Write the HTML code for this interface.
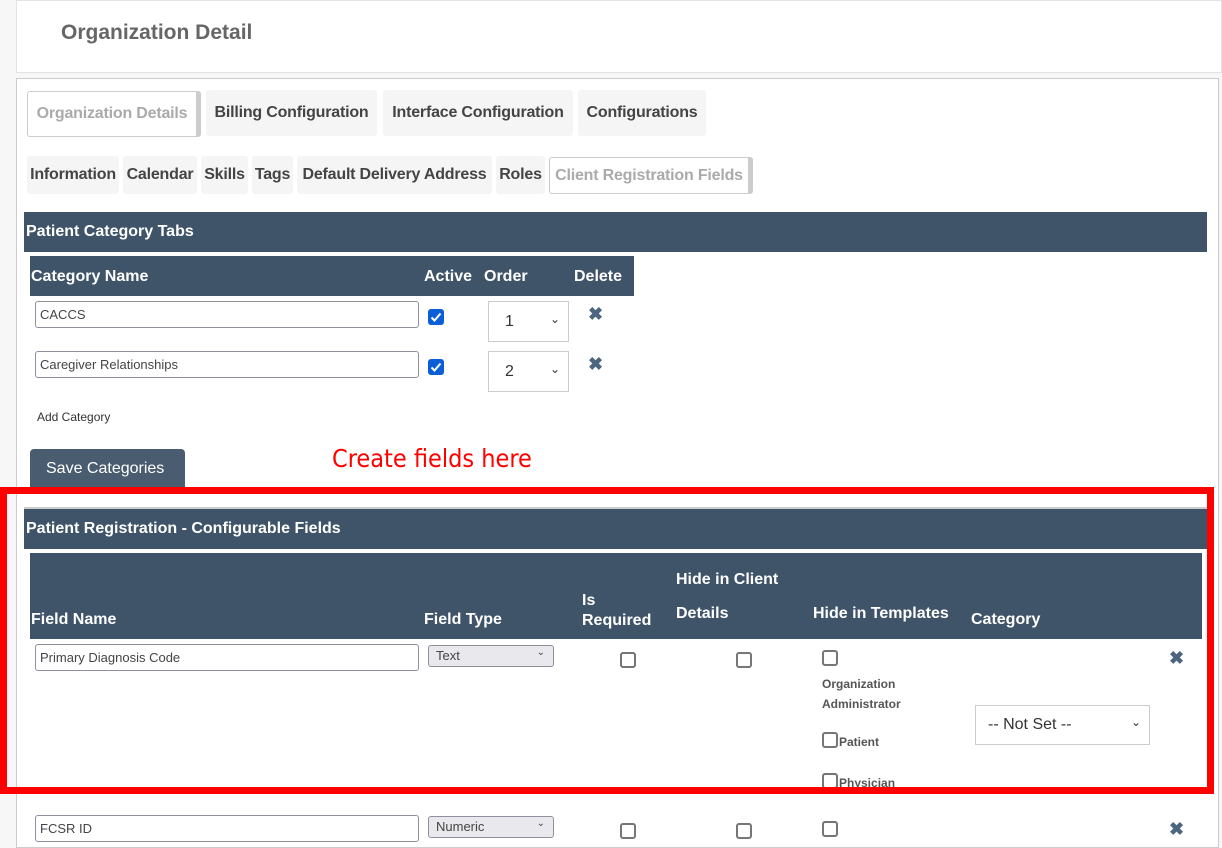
<!DOCTYPE html>
<html><head><meta charset="utf-8"><style>
*{box-sizing:border-box;margin:0;padding:0}
body{width:1222px;height:843px;overflow:hidden;background:#f7f7f7;font-family:"Liberation Sans",Arial,sans-serif;position:relative}
.a{position:absolute}
.tab{position:absolute;background:#f5f5f5;border-radius:3px;font-weight:bold;font-size:16px;color:#444;display:flex;align-items:center;justify-content:center;letter-spacing:-.2px}
.tab.act{background:#fff;border:1px solid #ccc;border-right:5px solid #ccc;color:#aaa}
.bar{position:absolute;background:#3f5469;color:#fff;font-weight:bold;font-size:16px}
.inp{position:absolute;background:#fff;border:1px solid #8f8f9d;border-radius:3px;font-size:13px;color:#444;padding:5px 4px}
.cb{position:absolute;width:16px;height:16px;border:2px solid #767676;border-radius:3px;background:#fff}
.cbc{position:absolute;width:16px;height:16px;border-radius:3px;background:#0b5ed7}
.x{position:absolute;font-size:18px;font-weight:bold;color:#4d6680;line-height:1}
.sel{position:absolute;background:#fff;border:1px solid #ccc;font-size:16px;color:#333}
.sm{position:absolute;background:#e9e9ed;border:1px solid #8f8f9d;border-radius:3px;font-size:13px;color:#444;padding:2px 7px}
.lab{position:absolute;font-size:12px;font-weight:bold;color:#555}
</style></head><body>
<div class="a" style="left:16px;top:0;width:1206px;height:73px;background:#fff;border:1px solid #e3e3e3"></div>
<div class="a" style="left:61px;top:21px;font-size:21px;font-weight:bold;color:#666">Organization Detail</div>
<div class="a" style="left:16px;top:78px;width:1203px;height:770px;background:#fff;border:1px solid #ccc"></div>

<div class="tab act" style="left:27px;top:91px;width:174px;height:46px">Organization Details</div>
<div class="tab" style="left:206px;top:90px;width:171px;height:46px">Billing Configuration</div>
<div class="tab" style="left:383px;top:90px;width:190px;height:46px">Interface Configuration</div>
<div class="tab" style="left:578px;top:90px;width:128px;height:46px">Configurations</div>

<div class="tab" style="left:27px;top:156px;width:92px;height:38px">Information</div>
<div class="tab" style="left:123px;top:156px;width:74px;height:38px">Calendar</div>
<div class="tab" style="left:201px;top:156px;width:47px;height:38px">Skills</div>
<div class="tab" style="left:252px;top:156px;width:41px;height:38px">Tags</div>
<div class="tab" style="left:297px;top:156px;width:195px;height:38px">Default Delivery Address</div>
<div class="tab" style="left:496px;top:156px;width:49px;height:38px">Roles</div>
<div class="tab act" style="left:549px;top:157px;width:204px;height:37px">Client Registration Fields</div>

<div class="bar" style="left:24px;top:212px;width:1183px;height:40px;padding:11px 2px">Patient Category Tabs</div>
<div class="bar" style="left:30px;top:256px;width:604px;height:40px">
<span class="a" style="left:1px;top:12px">Category Name</span><span class="a" style="left:394px;top:12px">Active</span><span class="a" style="left:454px;top:12px">Order</span><span class="a" style="left:544px;top:12px">Delete</span></div>

<div class="inp" style="left:35px;top:301px;width:384px;height:27px">CACCS</div>
<div class="cbc" style="left:428px;top:309px"><svg width="16" height="16"><path d="M3.5 8.5l3 3 6-7" stroke="#fff" stroke-width="2" fill="none"/></svg></div>
<div class="sel" style="left:488px;top:301px;width:81px;height:41px;padding:11px 16px">1<span class="a" style="right:8px;top:10px;font-size:12px">&#8964;</span></div>
<div class="x" style="left:588px;top:305px">✖</div>

<div class="inp" style="left:35px;top:351px;width:384px;height:27px">Caregiver Relationships</div>
<div class="cbc" style="left:428px;top:359px"><svg width="16" height="16"><path d="M3.5 8.5l3 3 6-7" stroke="#fff" stroke-width="2" fill="none"/></svg></div>
<div class="sel" style="left:488px;top:351px;width:81px;height:41px;padding:11px 16px">2<span class="a" style="right:8px;top:10px;font-size:12px">&#8964;</span></div>
<div class="x" style="left:588px;top:355px">✖</div>

<div class="a" style="left:37px;top:410px;font-size:12px;color:#333">Add Category</div>
<div class="a" style="left:30px;top:449px;width:155px;height:40px;background:#4a5d70;border-radius:4px 4px 0 0;color:#fff;font-size:16px;padding:11px 16px">Save Categories</div>
<div class="a" style="left:332px;top:444px;font-size:25px;color:#f00;font-family:'DejaVu Sans Condensed','Liberation Sans',sans-serif;font-stretch:condensed">Create fields here</div>

<div class="a" style="left:24px;top:507px;width:1183px;height:2px;background:#ccc"></div>
<div class="bar" style="left:24px;top:509px;width:1183px;height:40px;padding:11px 2px">Patient Registration - Configurable Fields</div>
<div class="bar" style="left:30px;top:553px;width:1172px;height:86px">
<span class="a" style="left:1px;top:58px">Field Name</span>
<span class="a" style="left:394px;top:58px">Field Type</span>
<span class="a" style="left:552px;top:38px;line-height:20px">Is<br>Required</span>
<span class="a" style="left:646px;top:18px">Hide in Client</span>
<span class="a" style="left:646px;top:52px">Details</span>
<span class="a" style="left:783px;top:52px">Hide in Templates</span>
<span class="a" style="left:941px;top:58px">Category</span></div>

<div class="inp" style="left:35px;top:644px;width:384px;height:27px">Primary Diagnosis Code</div>
<div class="sm" style="left:428px;top:645px;width:126px;height:22px">Text<span class="a" style="right:8px;top:1px;font-size:10px">&#8964;</span></div>
<div class="cb" style="left:620px;top:652px"></div>
<div class="cb" style="left:736px;top:652px"></div>
<div class="cb" style="left:822px;top:650px"></div>
<div class="lab" style="left:822px;top:674px;line-height:20px">Organization<br>Administrator</div>
<div class="cb" style="left:822px;top:732px"></div><div class="lab" style="left:839px;top:735px">Patient</div>
<div class="cb" style="left:822px;top:773px"></div><div class="lab" style="left:839px;top:776px">Physician</div>
<div class="sel" style="left:975px;top:705px;width:175px;height:40px;padding:10px 12px">-- Not Set --<span class="a" style="right:8px;top:9px;font-size:12px">&#8964;</span></div>
<div class="x" style="left:1169px;top:649px">✖</div>

<div class="a" style="left:0;top:487px;width:1214px;height:307px;border:7px solid #f00"></div>

<div class="inp" style="left:35px;top:815px;width:384px;height:27px">FCSR ID</div>
<div class="sm" style="left:428px;top:816px;width:126px;height:22px">Numeric<span class="a" style="right:8px;top:1px;font-size:10px">&#8964;</span></div>
<div class="cb" style="left:620px;top:823px"></div>
<div class="cb" style="left:736px;top:823px"></div>
<div class="cb" style="left:822px;top:821px"></div>
<div class="x" style="left:1169px;top:820px">✖</div>
</body></html>
